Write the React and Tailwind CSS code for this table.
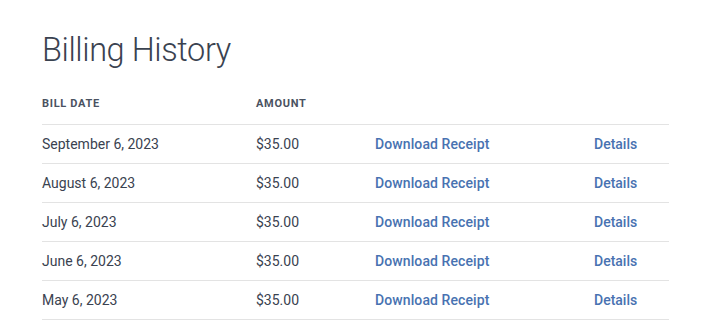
export default function App() {
  const rows = [
    "September 6, 2023",
    "August 6, 2023",
    "July 6, 2023",
    "June 6, 2023",
    "May 6, 2023",
  ];
  return (
    <div className="bg-white w-[712px] h-[323px] overflow-hidden pl-[42px] pr-[43px] pt-[30px]" style={{ fontFamily: "Roboto, 'Liberation Sans', sans-serif" }}>
      <h1 className="text-[32.5px] font-light text-[#3a4250] leading-[40px] tracking-[-0.4px]">Billing History</h1>
      <div className="mt-[26px] flex h-[28px] items-start text-[11px] font-bold tracking-[0.7px] text-[#4a5261]">
        <div className="w-[214px]">BILL DATE</div>
        <div className="w-[119px]">AMOUNT</div>
      </div>
      {rows.map((d) => (
        <div key={d} className="flex h-[39px] items-center border-t border-[#e3e3e3] text-[14px] text-[#3a4250]">
          <div className="w-[214px]">{d}</div>
          <div className="w-[119px]">$35.00</div>
          <div className="w-[219px] text-[#4872b1] font-medium tracking-[0.1px]">Download Receipt</div>
          <div className="text-[#4872b1] font-medium">Details</div>
        </div>
      ))}
      <div className="border-t border-[#e3e3e3]" />
    </div>
  );
}
